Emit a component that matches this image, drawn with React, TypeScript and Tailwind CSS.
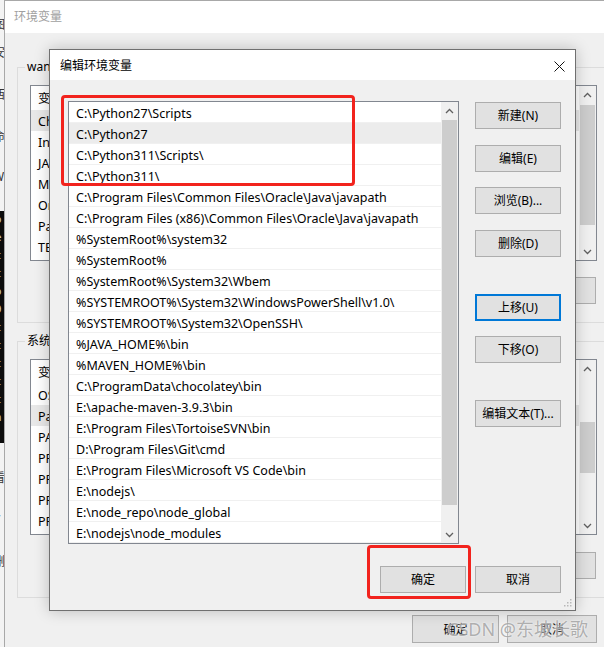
import clsx from "clsx";

const ui = "font-['Noto_Sans','Noto_Sans_CJK_SC',sans-serif]";

const paths = [
  "C:\\Python27\\Scripts",
  "C:\\Python27",
  "C:\\Python311\\Scripts\\",
  "C:\\Python311\\",
  "C:\\Program Files\\Common Files\\Oracle\\Java\\javapath",
  "C:\\Program Files (x86)\\Common Files\\Oracle\\Java\\javapath",
  "%SystemRoot%\\system32",
  "%SystemRoot%",
  "%SystemRoot%\\System32\\Wbem",
  "%SYSTEMROOT%\\System32\\WindowsPowerShell\\v1.0\\",
  "%SYSTEMROOT%\\System32\\OpenSSH\\",
  "%JAVA_HOME%\\bin",
  "%MAVEN_HOME%\\bin",
  "C:\\ProgramData\\chocolatey\\bin",
  "E:\\apache-maven-3.9.3\\bin",
  "E:\\Program Files\\TortoiseSVN\\bin",
  "D:\\Program Files\\Git\\cmd",
  "E:\\Program Files\\Microsoft VS Code\\bin",
  "E:\\nodejs\\",
  "E:\\node_repo\\node_global",
  "E:\\nodejs\\node_modules",
];

const userVars = ["ChocolateyLastPathUpdate", "IntelliJ IDEA", "JAVA_HOME", "MAVEN_HOME", "OneDrive", "Path", "TEMP"];
const sysVars = ["OS", "Path", "PATHEXT", "PROCESSOR_ARCHITECTURE", "PROCESSOR_IDENTIFIER", "PROCESSOR_LEVEL", "PROCESSOR_REVISION"];

function Chevron({ up }: { up?: boolean }) {
  return (
    <svg width="9" height="6" viewBox="0 0 9 6" className="text-[#606060]">
      <polyline
        points={up ? "1,5 4.5,1.5 8,5" : "1,1 4.5,4.5 8,1"}
        fill="none"
        stroke="currentColor"
        strokeWidth="1.3"
      />
    </svg>
  );
}

function Scrollbar({ thumbTop, thumbHeight }: { thumbTop: number; thumbHeight: number }) {
  return (
    <div className="flex w-[17px] shrink-0 flex-col bg-[#f0f0f0]">
      <div className="flex h-[17px] items-center justify-center">
        <Chevron up />
      </div>
      <div className="flex-1 px-[1px]">
        <div className="bg-[#cdcdcd]" style={{ marginTop: thumbTop, height: thumbHeight }} />
      </div>
      <div className="flex h-[17px] items-center justify-center">
        <Chevron />
      </div>
    </div>
  );
}

function WinButton({ label, focused, className }: { label: string; focused?: boolean; className?: string }) {
  return (
    <div
      className={clsx(
        "flex h-[27px] w-[86px] shrink-0 items-center justify-center bg-[#e1e1e1] pt-[1px] text-[12px] text-black",
        focused ? "border-2 border-[#0078d7]" : "border border-[#adadad]",
        className,
      )}
    >
      {label}
    </div>
  );
}

function VarList({ rows, active, thumbTop, thumbHeight }: { rows: string[]; active: number; thumbTop: number; thumbHeight: number }) {
  return (
    <div className="flex h-[176px] w-[567px] border border-[#828790] bg-white">
      <div className="flex-1 text-[12.5px] text-black">
        <div className="flex h-[24px] items-center pl-[7px] pt-[3px]">
          <span className="w-[150px]">变量</span>
          <span>值</span>
        </div>
        {rows.map((r, i) => (
          <div key={r} className={clsx("flex h-[21px] items-center pl-[7px] pt-[4px]", i === active && "bg-[#e8e8e8]")}>
            {r}
          </div>
        ))}
      </div>
      <Scrollbar thumbTop={thumbTop} thumbHeight={thumbHeight} />
    </div>
  );
}

function GroupBox({ label, children, className }: { label: string; children: React.ReactNode; className?: string }) {
  return (
    <div className={clsx("relative w-[640px] border border-[#dcdcdc] pl-[12px] pt-[17px]", className)}>
      <span className="absolute -top-[9px] left-[7px] bg-[#f0f0f0] px-[2px] text-[12px] leading-[16px] text-black">
        {label}
      </span>
      {children}
    </div>
  );
}

function BackWindow() {
  return (
    <div className={clsx("absolute left-[4px] top-0 h-[700px] w-[660px] border-l border-t border-[#a8a8a8] bg-[#f0f0f0]", ui)}>
      <div className="flex h-[32px] items-center justify-between bg-white pl-[9px] pr-[50px] text-[12px] text-[#a0a0a0]">
        <span>环境变量</span>
        <svg width="10" height="10" viewBox="0 0 10 10" className="text-[#9a9a9a]">
          <path d="M0 0L10 10M10 0L0 10" stroke="currentColor" strokeWidth="1" />
        </svg>
      </div>
      <div className="pl-[12px] pt-[34px]">
        <GroupBox label="wang 的用户变量(U)" className="h-[256px]">
          <VarList rows={userVars} active={0} thumbTop={2} thumbHeight={120} />
          <div className="mt-[16px] flex w-[567px] justify-end gap-[8px] pr-[1px]">
            <WinButton label="新建(N)..." />
            <WinButton label="编辑(E)..." />
            <WinButton label="删除(D)" />
          </div>
        </GroupBox>
        <GroupBox label="系统变量(S)" className="mt-[18px] h-[257px]">
          <VarList rows={sysVars} active={1} thumbTop={45} thumbHeight={51} />
          <div className="mt-[17px] flex w-[567px] justify-end gap-[8px] pr-[1px]">
            <WinButton label="新建(W)..." />
            <WinButton label="编辑(I)..." />
            <WinButton label="删除(L)" />
          </div>
        </GroupBox>
        <div className="mt-[17px] flex w-[580px] justify-end gap-[8px]">
          <WinButton label="确定" className="h-[28px] w-[87px]" />
          <WinButton label="取消" className="h-[28px] w-[90px]" />
        </div>
      </div>
    </div>
  );
}

function BehindStrip() {
  const chars = [
    { c: "图", h: 28 },
    { c: "安", h: 42 },
    { c: "西", h: 42 },
    { c: "命", h: 40 },
    { c: "W", h: 43 },
  ];
  return (
    <div className={clsx("absolute left-0 top-0 flex h-[647px] w-[5px] flex-col overflow-hidden bg-[#f3f3f3] text-[12px] text-[#333]", ui)}>
      <div className="h-[16px]" />
      {chars.map((x) => (
        <div key={x.c} className="-ml-[7px] shrink-0" style={{ height: x.h }}>
          {x.c}
        </div>
      ))}
      <div className="h-[232px] shrink-0 bg-[#0c0c0c] font-['DejaVu_Sans_Mono',monospace] text-[11px] leading-[18px] text-[#ccc]">
        <div className="-ml-[5px]">
          o<br />e<br />t<br />t<br />o<br />9<br />t<br />t<br />t<br />t<br />t<br />n
        </div>
      </div>
      <div className="h-[26px] shrink-0" />
      <div className="-ml-[7px] h-[42px] shrink-0">看</div>
      <div className="-ml-[7px] h-[42px] shrink-0">V</div>
      <div className="-ml-[7px] h-[42px] shrink-0">删</div>
    </div>
  );
}

function EditDialog() {
  return (
    <div
      className={clsx(
        "absolute left-[49px] top-[49px] flex h-[562px] w-[527px] flex-col border border-[#707070] bg-[#f0f0f0] shadow-[0_0_14px_rgba(0,0,0,0.22)]",
        ui,
      )}
    >
      <div className="flex h-[30px] shrink-0 items-center justify-between bg-white pl-[10px] pr-[10px] pt-[2px] text-[12px] text-black">
        <span>编辑环境变量</span>
        <svg width="11" height="11" viewBox="0 0 11 11">
          <path d="M0.5 0.5L10.5 10.5M10.5 0.5L0.5 10.5" stroke="#111" strokeWidth="1" />
        </svg>
      </div>
      <div className="flex pl-[18px] pt-[21px]">
        <div className="flex h-[443px] w-[391px] border border-[#828790] bg-white">
          <div className="flex-1 text-[12.5px] text-black">
            {paths.map((p, i) => (
              <div
                key={p}
                className={clsx(
                  "flex h-[21px] items-center whitespace-nowrap border-b border-[#f0f0f0] pl-[7px] pt-[4px]",
                  i === 1 && "bg-[#ececec]",
                )}
              >
                {p}
              </div>
            ))}
          </div>
          <Scrollbar thumbTop={1} thumbHeight={385} />
        </div>
        <div className="ml-[16px] mt-[1px] flex flex-col">
          <WinButton label="新建(N)" />
          <WinButton label="编辑(E)" className="mt-[16px]" />
          <WinButton label="浏览(B)..." className="mt-[15px]" />
          <WinButton label="删除(D)" className="mt-[16px]" />
          <WinButton label="上移(U)" focused className="mt-[37px]" />
          <WinButton label="下移(O)" className="mt-[15px]" />
          <WinButton label="编辑文本(T)..." className="mt-[37px]" />
        </div>
      </div>
      <div className="mt-[22px] flex justify-end gap-[9px] pr-[14px]">
        <WinButton label="确定" />
        <WinButton label="取消" />
      </div>
      <svg width="8" height="8" viewBox="0 0 8 8" className="absolute bottom-[3px] right-[3px] text-[#b8b8b8]">
        <rect x="6" y="0" width="1.5" height="1.5" fill="currentColor" />
        <rect x="3" y="3" width="1.5" height="1.5" fill="currentColor" />
        <rect x="6" y="3" width="1.5" height="1.5" fill="currentColor" />
        <rect x="0" y="6" width="1.5" height="1.5" fill="currentColor" />
        <rect x="3" y="6" width="1.5" height="1.5" fill="currentColor" />
        <rect x="6" y="6" width="1.5" height="1.5" fill="currentColor" />
      </svg>
    </div>
  );
}

export default function App() {
  return (
    <div className="relative h-[647px] w-[604px] overflow-hidden bg-[#f0f0f0]">
      <BehindStrip />
      <BackWindow />
      <EditDialog />
      {/* annotation boxes drawn over the screenshot */}
      <div className="absolute left-[61px] top-[95px] h-[91px] w-[294px] rounded-[4px] border-[3px] border-[#f2231d]" />
      <div className="absolute left-[367px] top-[545px] h-[54px] w-[104px] rounded-[4px] border-[3px] border-[#f2231d]" />
      <div
        className={clsx(
          "absolute left-[447px] top-[617px] text-[18px] leading-[24px] text-[#9c9c9c]/80 [text-shadow:0_0_2px_#fff]",
          ui,
        )}
      >
        CSDN @东坡长歌
      </div>
    </div>
  );
}
